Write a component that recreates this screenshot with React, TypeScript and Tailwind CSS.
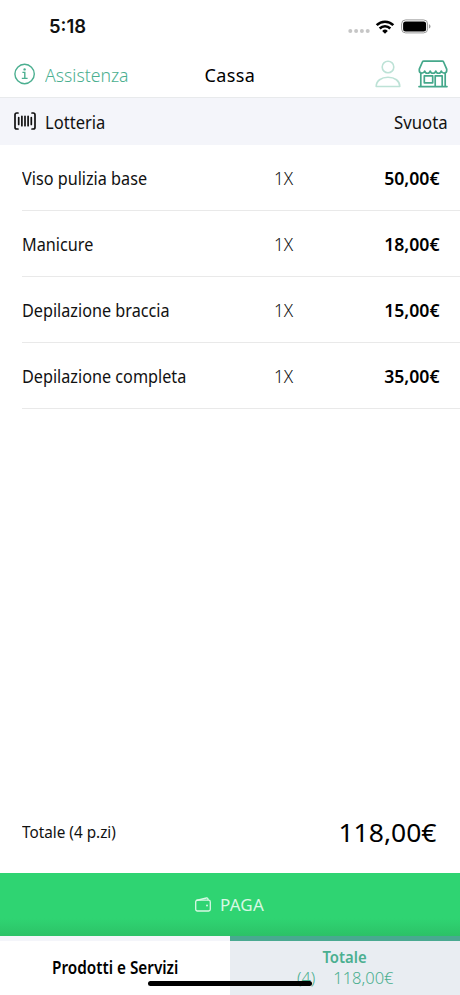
const rows = [
  { name: 'Viso pulizia base', price: '50,00€' },
  { name: 'Manicure', price: '18,00€' },
  { name: 'Depilazione braccia', price: '15,00€' },
  { name: 'Depilazione completa', price: '35,00€' },
];

function StatusBar() {
  return (
    <div className="flex h-[52px] items-center pl-[49px] pr-[29px] pt-px">
      <span className="font-['Inter',sans-serif] text-[18.400px] font-semibold leading-none">5:18</span>
      <svg className="ml-auto mt-[8px]" width="22" height="6" fill="#c6c6c6">
        <circle cx="2.3" cy="3" r="2" />
        <circle cx="8.1" cy="3" r="2" />
        <circle cx="13.9" cy="3" r="2" />
        <circle cx="19.7" cy="3" r="2" />
      </svg>
      <svg className="ml-[5px]" width="20" height="14" viewBox="0 0 20 14" fill="none" stroke="#000" strokeWidth="2.6">
        <path d="M1.7 5.2a11.7 11.7 0 0 1 16.6 0" />
        <path d="M4.700 8.500a7.500 7.500 0 0 1 10.600 0" />
        <path d="M10 13.700 7.200 10.900a4 4 0 0 1 5.600 0Z" fill="#000" stroke="none" />
      </svg>
      <svg className="ml-[6px]" width="30" height="15" viewBox="0 0 30 15">
        <rect x="0.6" y="0.9" width="26" height="13" rx="4" fill="none" stroke="#999" />
        <rect x="2.1" y="2.4" width="23" height="10" rx="2.5" />
        <path d="M28 5.3v4.2q1.5-.5 1.5-2.1T28 5.3Z" fill="#999" />
      </svg>
    </div>
  );
}

function InfoIcon() {
  return (
    <svg className="-mt-[2px]" width="22" height="22" viewBox="0 0 22 22" fill="none" stroke="#4baf90" strokeWidth="1.400">
      <circle cx="10.600" cy="11" r="9.700" />
      <path d="M8.400 9.400h2.400v6M7.800 15.400h5.800" />
      <circle cx="10.600" cy="6.400" r="1.200" fill="#4baf90" stroke="none" />
    </svg>
  );
}

function PersonIcon() {
  return (
    <svg className="-mt-px" width="26" height="28" viewBox="0 0 26 28" fill="none" stroke="#bde2d6" strokeWidth="1.600" strokeLinejoin="round">
      <circle cx="13" cy="7" r="5.800" />
      <path d="M1.200 26.500c0-5.600 5-9.300 11.800-9.300s11.800 3.700 11.800 9.300Z" />
    </svg>
  );
}

function StoreIcon() {
  return (
    <svg className="-mt-px" width="30" height="28" viewBox="0 0 30 28" fill="none" stroke="#45a88b" strokeWidth="1.700" strokeLinejoin="round" strokeLinecap="round">
      <path d="M5.800 1.100h18.400Q25.200 1.100 25.600 2L28.700 9.200v1.400c0 3.300-4.500 3.300-5.400.400-.8 3-4.700 3-5.500 0-.8 3-4.800 3-5.600 0-.8 3-4.700 3-5.500 0-.9 2.900-5.400 2.900-5.400-.400V9.200L4.400 2Q4.800 1.100 5.800 1.100Z" />
      <path d="M2.800 13.500v13M27.200 13.500v13M1 26.600h28M6.300 15.800h8.400v7H6.300zM17.200 26.500V15.800h7v10.700" />
    </svg>
  );
}

function BarcodeIcon() {
  return (
    <svg className="-mt-px" width="22" height="18" viewBox="0 0 22 18" fill="none" stroke="#111" strokeWidth="1.700" strokeLinecap="round">
      <path d="M4 1H2.800Q1 1 1 2.800v12.400Q1 17 2.800 17H4M18 1h1.200Q21 1 21 2.800v12.400q0 1.800-1.800 1.800H18" />
      <path d="M4.700 5.500v7M7.900 4.300v9.400M11 4.300v9.400M14.100 4.300v9.400M17.300 5.500v7" />
    </svg>
  );
}

function WalletIcon() {
  return (
    <svg className="-mt-px" width="16" height="15" viewBox="0 0 16 15" fill="none" stroke="#d8f8e4" strokeWidth="1.300" strokeLinejoin="round">
      <rect x=".700" y="3.200" width="14.600" height="10.800" rx="1.700" />
      <path d="M1.200 3.500 11.500 1q1.500-.3 1.600 2.100" />
      <circle cx="12" cy="8.600" r="1" fill="#d8f8e4" stroke="none" />
    </svg>
  );
}

export default function App() {
  return (
    <main className="relative flex h-[995px] w-[460px] flex-col overflow-hidden whitespace-nowrap bg-white font-['Noto_Sans','Open_Sans',sans-serif] text-[18px] leading-6 text-[#111]">
      <StatusBar />
      <header className="flex h-[46px] items-center border-b border-[#e8eaec] pl-[14px] pr-[12px]">
        <InfoIcon />
        <span className="ml-[9px] w-[159.500px]">
          <span className="inline-block origin-left scale-x-[.98] font-[350] text-[#4baf90]">Assistenza</span>
        </span>
        <span className="inline-block text-[18px] tracking-[.4px] text-black">Cassa</span>
        <span className="ml-auto flex items-center gap-[17px]">
          <PersonIcon />
          <StoreIcon />
        </span>
      </header>
      <section className="flex h-[47px] items-center bg-[#f4f5fa] pl-[14px] pr-[12px]">
        <BarcodeIcon />
        <span className="ml-[9px] inline-block origin-left scale-x-[.92]">Lotteria</span>
        <span className="ml-auto inline-block origin-right scale-x-[.93]">Svuota</span>
      </section>
      <ul className="pl-[22px]">
        {rows.map((r) => (
          <li key={r.name} className="flex h-[66px] items-center border-b border-[#e9e9e9] pr-[20px] pt-px">
            <span className="w-[252px]">
              <span className="inline-block origin-left scale-x-[.9]">{r.name}</span>
            </span>
            <span className="inline-block origin-left scale-x-[.95] font-light">1X</span>
            <span className="ml-auto inline-block origin-right scale-x-[.98] font-semibold text-black">{r.price}</span>
          </li>
        ))}
      </ul>
      <section className="mt-auto flex h-[82px] items-center justify-between pl-[22px] pr-[23px]">
        <span className="inline-block origin-left scale-x-[.9] text-[17px]">Totale (4 p.zi)</span>
        <span className="inline-block origin-right scale-x-[1.06] text-[25px] text-black">118,00€</span>
      </section>
      <button className="flex h-[63px] items-center justify-center gap-[9px] bg-[linear-gradient(to_bottom,#2fd472_0%,#2fd472_72%,#2cc267_100%)] pr-px text-[#d8f8e4]">
        <WalletIcon />
        <span className="text-[17px] tracking-[.2px]">PAGA</span>
      </button>
      <nav className="grid h-[59px] grid-cols-2">
        <div className="flex items-center justify-center border-t-[5px] border-[#f4f5fa] bg-white text-[17px] font-semibold text-black">
          <span className="inline-block scale-x-[.9]">Prodotti e Servizi</span>
        </div>
        <div className="flex flex-col items-center border-t-[5px] border-[#49a991] bg-[#e9edf2] pt-[6px] text-[17px] leading-[21px] text-[#4baf90]">
          <span className="inline-block scale-x-[.9] text-[16.500px] leading-[20px] font-semibold">Totale</span>
          <span className="mt-px flex w-[97px] justify-between text-[16.500px] leading-[20px] font-light">
            <span className="inline-block origin-left scale-x-[.98]">(4)</span>
            <span className="inline-block origin-right">118,00€</span>
          </span>
        </div>
      </nav>
      <div className="absolute bottom-[9px] left-[148px] h-[5px] w-[164px] rounded-full bg-black" />
    </main>
  );
}
